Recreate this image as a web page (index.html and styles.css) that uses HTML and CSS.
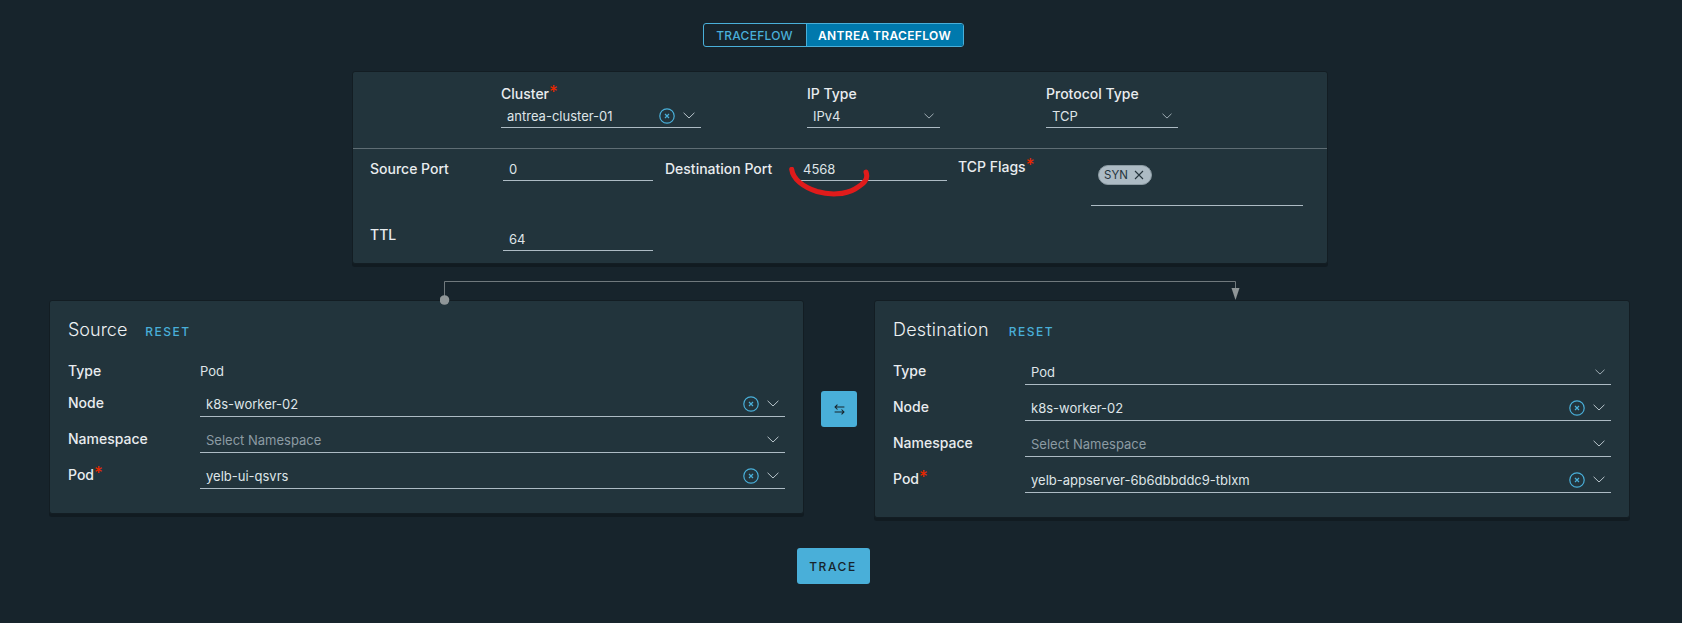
FILE: index.html
```html
<!DOCTYPE html>
<html lang="en">
<head>
<meta charset="utf-8">
<title>Antrea Traceflow</title>
<link rel="stylesheet" href="styles.css">
</head>
<body>
<svg class="defs" width="0" height="0" aria-hidden="true">
  <symbol id="clear" viewBox="0 0 16 16">
    <circle cx="8" cy="8" r="7.2" fill="none" stroke="#49afd9" stroke-width="1.2"/>
    <path d="M6 6l4 4M10 6l-4 4" fill="none" stroke="#49afd9" stroke-width="1.2"/>
  </symbol>
  <symbol id="chev" viewBox="0 0 12 7">
    <path d="M.6.8L6 6l5.4-5.2" fill="none" stroke="#b8c4cb" stroke-width="1"/>
  </symbol>
</svg>
<main class="page">
  <div class="toggle-row">
    <div class="toggle">
      <button class="toggle-btn">TRACEFLOW</button>
      <button class="toggle-btn is-active">ANTREA TRACEFLOW</button>
    </div>
  </div>

  <section class="card top-card">
    <div class="top-row">
      <div class="top-field field-wide">
        <div class="label">Cluster<span class="req">*</span></div>
        <div class="select"><span class="value">antrea-cluster-01</span><svg class="clear"><use href="#clear"/></svg><svg class="chev"><use href="#chev"/></svg></div>
      </div>
      <div class="top-field field-narrow">
        <div class="label">IP Type</div>
        <div class="select"><span class="value">IPv4</span><svg class="chev chev-sm"><use href="#chev"/></svg></div>
      </div>
      <div class="top-field field-proto">
        <div class="label">Protocol Type</div>
        <div class="select"><span class="value">TCP</span><svg class="chev chev-sm"><use href="#chev"/></svg></div>
      </div>
    </div>
    <div class="port-grid">
      <div class="label port-label">Source Port</div>
      <div class="input"><span class="value">0</span></div>
      <div class="label port-label">Destination Port</div>
      <div class="input"><span class="value">4568</span></div>
      <div class="label flags-label">TCP Flags<span class="req">*</span></div>
      <div class="flags"><span class="chip">SYN<svg class="chip-x" viewBox="0 0 10 10"><path d="M1 1l8 8M9 1l-8 8" fill="none" stroke="#26353d" stroke-width="1.1"/></svg></span></div>
      <div class="label port-label ttl-label">TTL</div>
      <div class="input ttl-input"><span class="value">64</span></div>
    </div>
  </section>

  <div class="endpoints">
    <section class="card endpoint source">
      <h2 class="title">Source<a class="reset">RESET</a></h2>
      <div class="row row-static"><div class="label">Type</div><div class="static">Pod</div></div>
      <div class="row"><div class="label">Node</div><div class="select"><span class="value">k8s-worker-02</span><svg class="clear"><use href="#clear"/></svg><svg class="chev"><use href="#chev"/></svg></div></div>
      <div class="row"><div class="label">Namespace</div><div class="select"><span class="value placeholder">Select Namespace</span><svg class="chev"><use href="#chev"/></svg></div></div>
      <div class="row"><div class="label">Pod<span class="req">*</span></div><div class="select"><span class="value">yelb-ui-qsvrs</span><svg class="clear"><use href="#clear"/></svg><svg class="chev"><use href="#chev"/></svg></div></div>
    </section>

    <button class="swap" aria-label="Swap">
      <svg viewBox="0 0 16 16" width="13" height="13"><path d="M14 5H2.500M5.500 2L2.500 5l3 3M2 11h11.500M10.500 8l3 3-3 3" fill="none" stroke="#17242b" stroke-width="1.300"/></svg>
    </button>

    <section class="card endpoint destination">
      <h2 class="title">Destination<a class="reset">RESET</a></h2>
      <div class="row"><div class="label">Type</div><div class="select"><span class="value">Pod</span><svg class="chev chev-sm"><use href="#chev"/></svg></div></div>
      <div class="row"><div class="label">Node</div><div class="select"><span class="value">k8s-worker-02</span><svg class="clear"><use href="#clear"/></svg><svg class="chev"><use href="#chev"/></svg></div></div>
      <div class="row"><div class="label">Namespace</div><div class="select"><span class="value placeholder">Select Namespace</span><svg class="chev"><use href="#chev"/></svg></div></div>
      <div class="row"><div class="label">Pod<span class="req">*</span></div><div class="select"><span class="value">yelb-appserver-6b6dbbddc9-tblxm</span><svg class="clear"><use href="#clear"/></svg><svg class="chev"><use href="#chev"/></svg></div></div>
    </section>
  </div>

  <div class="trace-row"><button class="trace">TRACE</button></div>

  <svg class="connector" width="810" height="30" viewBox="0 0 810 30" aria-hidden="true">
    <path d="M4.500 2.500H795.500V10M4.500 2.500V21" fill="none" stroke="#70797d" stroke-width="1"/>
    <circle cx="4.500" cy="21" r="4.800" fill="#8f9698"/>
    <path d="M791.500 9h8L795.500 21z" fill="#8f9698"/>
  </svg>
  <svg class="scribble" width="90" height="40" viewBox="0 0 90 40" aria-hidden="true">
    <path d="M2.700 2.300C4 12 14 20 28 24.500 40 28 56 28 66 22 74 17 80 13 77 5" fill="none" stroke="#e01b1b" stroke-width="5" stroke-linecap="round"/>
  </svg>
</main>
</body>
</html>
```
FILE: styles.css
```css
* { box-sizing: border-box; }
html, body { margin: 0; height: 100%; }
body {
  background: #17242c;
  color: #e9ecef;
  font-family: Inter, "Open Sans", "Liberation Sans", sans-serif;
  font-size: 13px;
  overflow: hidden;
}
.defs { position: absolute; }
.page {
  position: relative;
  padding: 23px 52px 0 49px;
  height: 623px;
}
.toggle-row, .trace-row { display: flex; justify-content: center; padding-right: 13px; }
.toggle {
  display: flex;
  height: 24px;
  border: 1px solid #49afd9;
  border-radius: 3px;
  overflow: hidden;
}
.toggle-btn {
  border: 0;
  background: transparent;
  color: #49afd9;
  font: 500 12px Inter, sans-serif;
  letter-spacing: 0.25px;
  padding: 0;
  width: 102px;
}
.toggle-btn.is-active {
  width: 157px;
  background: #0079ad;
  color: #fff;
  font-weight: 600;
  letter-spacing: 0.35px;
  border-left: 1px solid #49afd9;
}
.card {
  background: #22343c;
  border: 1px solid #131d23;
  border-radius: 3px;
  box-shadow: 0 3px 0 #111b21;
}
.top-card {
  width: 976px;
  height: 193px;
  margin: 24px 0 0 303px;
}
.top-row {
  display: flex;
  gap: 106px;
  height: 77px;
  padding: 12px 0 0 148px;
  border-bottom: 1px solid #5f6d74;
}
.top-field { display: flex; flex-direction: column; }
.field-wide { width: 200px; }
.field-narrow { width: 133px; }
.field-proto { width: 132px; }
.label {
  font-size: 14px;
  font-weight: 500;
  line-height: 20px;
  color: #e9ecef;
  white-space: nowrap;
}
.req { color: #e62700; font-size: 17px; line-height: 0; vertical-align: 1px; }
.select, .input {
  display: flex;
  align-items: center;
  height: 24px;
  border-bottom: 1px solid #adbbc4;
  padding: 0 6px;
}
.value { flex: 1; font-size: 13px; line-height: 22px; color: #dfe5e8; white-space: nowrap; }
.placeholder { color: #8c9ba3; }
.clear { width: 16px; height: 16px; margin-right: 8px; flex: none; }
.chev { width: 12px; height: 7px; flex: none; }
.chev-sm { width: 10px; height: 6px; }
.port-grid {
  display: grid;
  grid-template-columns: 133px 150px 12px 132px 150px 11px 133px 212px;
  grid-template-rows: 68px 26px;
  padding: 8px 0 0 17px;
}
.port-label { padding-top: 2px; }
.port-grid > .input:nth-child(4) { grid-column: 5; }
.port-grid > .label:nth-child(3) { grid-column: 4; }
.flags-label { grid-column: 7; }
.flags {
  height: 49px;
  border-bottom: 1px solid #adbbc4;
  padding: 8px 0 0 7px;
}
.chip {
  display: inline-flex;
  align-items: center;
  gap: 6px;
  height: 20px;
  width: 54px;
  padding-left: 5px;
  border-radius: 10px;
  border: 1px solid #8c9ba3;
  background: #adbbc4;
  color: #26353d;
  font-size: 11.500px;
}
.chip-x { width: 10px; height: 10px; }
.ttl-label { padding-top: 0; }
.ttl-input { margin-top: 2px; }
.endpoints {
  display: flex;
  align-items: flex-start;
  margin-top: 36px;
}
.endpoint { padding: 17px 17px 24px 18px; }
.source { width: 755px; padding-right: 18px; }
.destination { width: 756px; }
.title {
  display: flex;
  align-items: baseline;
  gap: 18px;
  margin: 0 0 7px;
  height: 24px;
  font-size: 18px;
  font-weight: 300;
  line-height: 24px;
  color: #eef1f3;
}
.reset { font-size: 12px; font-weight: 500; letter-spacing: 1.500px; color: #49afd9; }
.destination .reset { margin-left: 2px; }
.destination .title { letter-spacing: 0.2px; }
.row {
  display: grid;
  grid-template-columns: 132px 1fr;
  height: 36px;
  padding-top: 12px;
}
.row > .select { margin-top: -1px; height: 25px; padding-bottom: 1px; }
.destination .row { grid-template-columns: 132px 586px; }
.row-static { height: 32px; }
.static { font-size: 13px; line-height: 20px; color: #dfe5e8; }
.swap {
  display: flex;
  align-items: center;
  justify-content: center;
  width: 36px;
  height: 36px;
  margin: 91px 17px 0;
  padding: 0;
  border: 0;
  border-radius: 3px;
  background: #49afd9;
}
.trace-row { margin-top: 30px; }
.trace {
  width: 73px;
  height: 36px;
  padding: 0;
  border: 0;
  border-radius: 3px;
  background: #49afd9;
  color: #17242c;
  font: 500 12px Inter, sans-serif;
  letter-spacing: 1.600px;
}
.connector { position: absolute; left: 440px; top: 279px; }
.scribble { position: absolute; left: 789px; top: 167px; }
```
